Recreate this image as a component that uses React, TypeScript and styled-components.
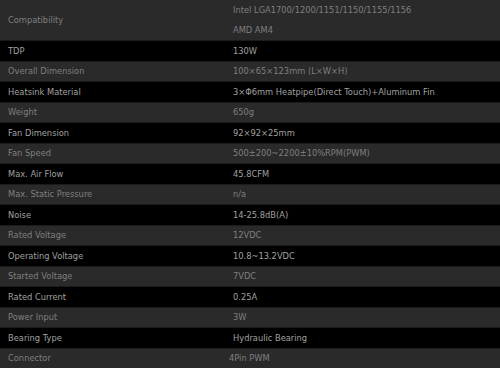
import React from 'react';
import styled, { createGlobalStyle } from 'styled-components';

const GlobalStyle = createGlobalStyle`
  html, body {
    margin: 0;
    padding: 0;
    background: #000;
  }
  body {
    width: 500px;
    height: 368px;
    overflow: hidden;
    font-family: 'DejaVu Sans', Verdana, sans-serif;
  }
`;

const SpecTable = styled.div`
  width: 500px;
  display: flex;
  flex-direction: column;
`;

const Row = styled.div<{ $dark: boolean; $first?: boolean }>`
  display: grid;
  grid-template-columns: 233px 1fr;
  align-items: center;
  background-color: ${({ $dark }) => ($dark ? '#000' : '#2a2a2a')};
  color: ${({ $dark }) => ($dark ? '#a0a0a0' : '#7f7f7f')};
  border-top: ${({ $first }) => ($first ? '0' : '1px solid #1b1b1b')};
  font-size: 8.3px;
  line-height: 12px;
`;

const Label = styled.div`
  padding-left: 8px;
  white-space: nowrap;
`;

const Value = styled.div<{ $shift?: number }>`
  white-space: nowrap;
  margin-left: ${({ $shift }) => ($shift ? `${-$shift}px` : '0')};
`;

const ValueLine = styled.div`
  height: 20px;
  display: flex;
  align-items: center;
`;

const Cell = styled.div`
  height: 19.5px;
  display: flex;
  align-items: center;
`;

type Spec = { label: string; value: string; shift?: number };

const specs: Spec[] = [
  { label: 'TDP', value: '130W' },
  { label: 'Overall Dimension', value: '100×65×123mm (L×W×H)' },
  { label: 'Heatsink Material', value: '3×Φ6mm Heatpipe(Direct Touch)+Aluminum Fin' },
  { label: 'Weight', value: '650g' },
  { label: 'Fan Dimension', value: '92×92×25mm' },
  { label: 'Fan Speed', value: '500±200~2200±10%RPM(PWM)' },
  { label: 'Max. Air Flow', value: '45.8CFM' },
  { label: 'Max. Static Pressure', value: 'n/a' },
  { label: 'Noise', value: '14-25.8dB(A)' },
  { label: 'Rated Voltage', value: '12VDC' },
  { label: 'Operating Voltage', value: '10.8~13.2VDC' },
  { label: 'Started Voltage', value: '7VDC' },
  { label: 'Rated Current', value: '0.25A' },
  { label: 'Power Input', value: '3W' },
  { label: 'Bearing Type', value: 'Hydraulic Bearing' },
  { label: 'Connector', value: '4Pin PWM', shift: 4 },
];

const App = () => (
  <>
    <GlobalStyle />
    <SpecTable>
      <Row $dark={false} $first>
        <Label>Compatibility</Label>
        <Value>
          <ValueLine>Intel LGA1700/1200/1151/1150/1155/1156</ValueLine>
          <ValueLine>AMD AM4</ValueLine>
        </Value>
      </Row>
      {specs.map((s, i) => (
        <Row key={s.label} $dark={i % 2 === 0}>
          <Label>{s.label}</Label>
          <Value $shift={s.shift}>
            <Cell>{s.value}</Cell>
          </Value>
        </Row>
      ))}
    </SpecTable>
  </>
);

export default App;
